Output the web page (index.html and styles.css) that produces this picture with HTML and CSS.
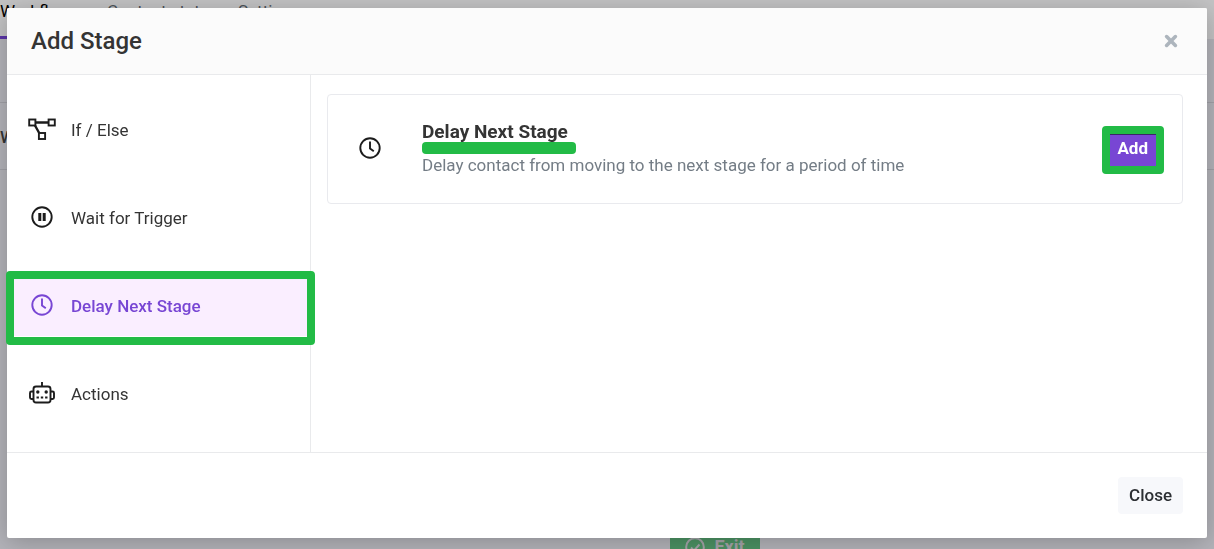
FILE: index.html
```html
<!DOCTYPE html>
<html lang="en">
<head>
  <meta charset="UTF-8">
  <meta name="viewport" content="width=device-width, initial-scale=1">
  <title>Add Stage</title>
  <link rel="stylesheet" href="styles.css">
</head>
<body>

  <div class="page">
    <nav class="tabs">
      <a href="#" class="tab active">Workflow</a>
      <a href="#" class="tab">Contact status</a>
      <a href="#" class="tab">Settings</a>
    </nav>
    <div class="toolbar"></div>
    <div class="page-title">Workflow</div>
    <div class="canvas">
      <div class="exit-node">
        <svg width="20" height="20" viewBox="0 0 20 20" fill="none" stroke="currentColor" stroke-width="2">
          <circle cx="10" cy="10" r="8.8"/>
          <path d="M6 10.500l3 3 5.500-6"/>
        </svg>
        Exit
      </div>
    </div>
  </div>

  <div class="backdrop">
    <div class="modal" role="dialog" aria-labelledby="modalTitle">
      <header class="modal-header">
        <h1 id="modalTitle">Add Stage</h1>
        <button class="dismiss" aria-label="Dismiss">
          <svg width="14" height="14" viewBox="0 0 14 14" stroke="currentColor" stroke-width="3.600" stroke-linecap="round">
            <path d="M2.600 2.600l8.800 8.800M11.400 2.600l-8.800 8.800"/>
          </svg>
        </button>
      </header>

      <div class="modal-body">
        <nav class="stage-list">
          <a href="#" class="stage">
            <svg width="28" height="28" viewBox="0 0 28 28" fill="none" stroke="currentColor" stroke-width="1.900">
              <path d="M8 6.500h12M7 9.500l4.500 8" stroke-width="2.400"/>
              <rect x="1.200" y="3.500" width="6.200" height="6"/>
              <rect x="20.600" y="3.500" width="6.200" height="6"/>
              <rect x="10.900" y="17" width="6.200" height="6"/>
            </svg>
            If / Else
          </a>
          <a href="#" class="stage">
            <svg width="28" height="28" viewBox="0 0 28 28" fill="none" stroke="currentColor" stroke-width="1.900">
              <circle cx="14" cy="13" r="9.700"/>
              <path d="M11.800 9v8M16.200 9v8" stroke-width="3"/>
            </svg>
            Wait for Trigger
          </a>
          <a href="#" class="stage active">
            <svg width="28" height="28" viewBox="0 0 28 28" fill="none" stroke="currentColor" stroke-width="1.900">
              <circle cx="14" cy="13" r="9.700"/>
              <path d="M14 6.500v7l3.800 2.800"/>
            </svg>
            Delay Next Stage
          </a>
          <a href="#" class="stage">
            <svg width="28" height="28" viewBox="0 0 28 28" fill="none" stroke="currentColor" stroke-width="1.900">
              <path d="M14 2v5"/>
              <rect x="5.500" y="6.500" width="17" height="16" rx="2.500"/>
              <path d="M5 11.500H3.500a1.500 1.500 0 0 0-1.500 1.500v4.500a1.500 1.500 0 0 0 1.500 1.500H5M23 11.500h1.500a1.500 1.500 0 0 1 1.500 1.500v4.500a1.500 1.500 0 0 1-1.500 1.500H23"/>
              <circle cx="9.800" cy="12" r="1.700" fill="currentColor" stroke="none"/>
              <circle cx="18.200" cy="12" r="1.700" fill="currentColor" stroke="none"/>
              <path d="M8.500 17.500h2.400M12.800 17.500h2.400M17.100 17.500h2.400"/>
            </svg>
            Actions
          </a>
        </nav>

        <section class="options">
          <article class="option">
            <svg class="option-icon" width="28" height="28" viewBox="0 0 28 28" fill="none" stroke="currentColor" stroke-width="1.900">
              <circle cx="14" cy="13" r="9.700"/>
              <path d="M14 6.500v7l3.800 2.800"/>
            </svg>
            <div class="option-text">
              <h2>Delay Next Stage</h2>
              <p>Delay contact from moving to the next stage for a period of time</p>
            </div>
            <button class="add">Add</button>
          </article>
        </section>
      </div>

      <footer class="modal-footer">
        <button class="close">Close</button>
      </footer>
    </div>
  </div>

</body>
</html>
```
FILE: styles.css
```css
* {
  box-sizing: border-box;
}

body {
  margin: 0;
  font-family: Roboto, "Liberation Sans", sans-serif;
  font-size: 17px;
  color: #343434;
  overflow: hidden;
}

h1, h2, p {
  margin: 0;
}

a {
  color: inherit;
  text-decoration: none;
}

button {
  border: none;
  font: inherit;
  color: inherit;
  cursor: pointer;
}

/* page behind the dialog */
.page {
  display: flex;
  flex-direction: column;
  height: 100vh;
  background: #b4b4ba;
}

.tabs {
  display: flex;
  gap: 20px;
  height: 39px;
  background: #c4c4c5;
  color: #4c5258;
}

.tab {
  line-height: 23px;
}

.tab.active {
  padding-right: 16px;
  border-bottom: 3px solid #5b35a8;
  color: #000;
}

.toolbar {
  height: 64px;
  border-bottom: 1px solid #a2a2a8;
}

.page-title {
  height: 67px;
  line-height: 68px;
  border-bottom: 1px solid #a2a2a8;
  font-weight: 500;
}

.canvas {
  display: flex;
  flex: 1;
  align-items: flex-end;
  justify-content: center;
  padding-left: 216px;
  overflow: hidden;
}

.exit-node {
  display: flex;
  align-items: center;
  gap: 9px;
  margin-bottom: -14px;
  padding: 6px 15px;
  background: #4c9364;
  color: #a5a5aa;
  font-size: 18px;
  font-weight: 700;
}

/* dialog */
.backdrop {
  position: fixed;
  inset: 0;
  padding: 8px 7px;
}

.modal {
  border-radius: 2px;
  background: #fff;
  box-shadow: 0 4px 26px rgba(0, 0, 0, 0.24);
}

.modal-header {
  display: flex;
  align-items: center;
  justify-content: space-between;
  height: 67px;
  padding: 0 24px;
  border-bottom: 1px solid #e9eaec;
  border-radius: 2px 2px 0 0;
  background: #fbfbfb;
}

.modal-header h1 {
  font-size: 24px;
  font-weight: 500;
}

.dismiss {
  display: flex;
  padding: 5px;
  background: none;
  color: #adb5bd;
}

.modal-body {
  display: flex;
}

.stage-list {
  display: flex;
  flex-direction: column;
  gap: 28px;
  width: 304px;
  padding: 25px 0 28px;
  border-right: 1px solid #e9eaec;
}

.stage {
  position: relative;
  display: flex;
  align-items: center;
  gap: 15px;
  height: 60px;
  padding-left: 21px;
}

.stage svg {
  color: #1c1c1c;
}

.stage.active {
  background: #faeeff;
  color: #7846d4;
  font-weight: 500;
}

.stage.active svg {
  color: inherit;
}

/* green highlight frame */
.stage.active::after {
  content: "";
  position: absolute;
  inset: -5px -5px -9px -1px;
  border: 8px solid #22bb46;
  border-radius: 4px;
}

.options {
  flex: 1;
  padding: 19px 24px 19px 16px;
}

.option {
  display: flex;
  align-items: center;
  height: 110px;
  padding: 0 18px 0 28px;
  border: 1px solid #e9eaee;
  border-radius: 4px;
}

.option-icon {
  color: #1c1c1c;
}

.option-text {
  flex: 1;
  padding: 0 0 2px 38px;
}

.option-text h2 {
  position: relative;
  width: fit-content;
  margin-bottom: 10px;
  font-size: 19px;
  font-weight: 700;
  line-height: 24px;
}

.option-text h2::after {
  content: "";
  position: absolute;
  left: 0;
  right: -8px;
  bottom: -10px;
  height: 12px;
  border-radius: 4px;
  background: #22bb46;
}

.option-text p {
  line-height: 22px;
  color: #747d86;
}

.add {
  height: 48px;
  margin-top: 2px;
  padding: 0 8px 4px 7px;
  border: 8px solid #22bb46;
  border-radius: 4px;
  background: #7846d4;
  box-shadow: inset 0 1px #3a2468;
  color: #fff;
  font-weight: 700;
}

.modal-footer {
  display: flex;
  justify-content: flex-end;
  padding: 24px;
  border-top: 1px solid #e9eaec;
}

.close {
  height: 37px;
  padding: 0 11px 2px;
  border-radius: 4px;
  background: #f7f8fb;
  color: #2c2f33;
  font-weight: 500;
}
```
